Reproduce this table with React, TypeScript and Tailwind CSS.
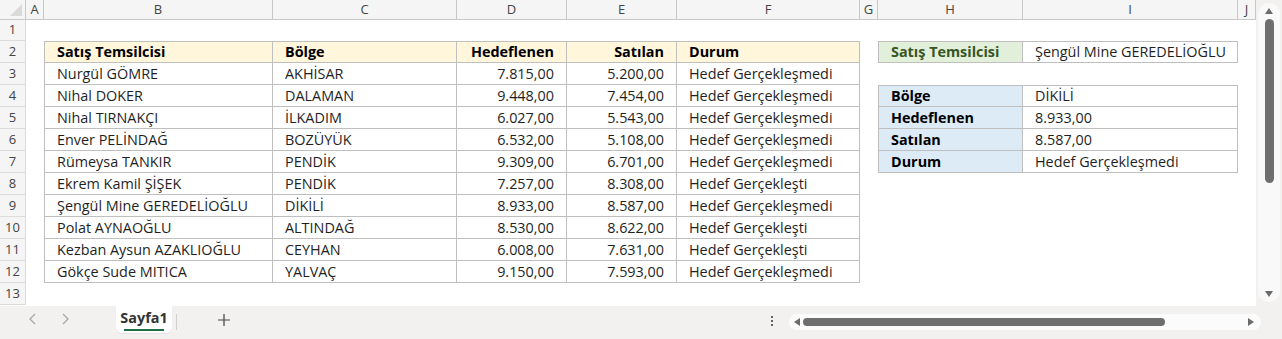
import React from "react";

const COLS = ["", "A", "B", "C", "D", "E", "F", "G", "H", "I", "J"];

const DATA: [string, string, string, string, string][] = [
  ["Nurgül GÖMRE", "AKHİSAR", "7.815,00", "5.200,00", "Hedef Gerçekleşmedi"],
  ["Nihal DOKER", "DALAMAN", "9.448,00", "7.454,00", "Hedef Gerçekleşmedi"],
  ["Nihal TIRNAKÇI", "İLKADIM", "6.027,00", "5.543,00", "Hedef Gerçekleşmedi"],
  ["Enver PELİNDAĞ", "BOZÜYÜK", "6.532,00", "5.108,00", "Hedef Gerçekleşmedi"],
  ["Rümeysa TANKIR", "PENDİK", "9.309,00", "6.701,00", "Hedef Gerçekleşmedi"],
  ["Ekrem Kamil ŞİŞEK", "PENDİK", "7.257,00", "8.308,00", "Hedef Gerçekleşti"],
  ["Şengül Mine GEREDELİOĞLU", "DİKİLİ", "8.933,00", "8.587,00", "Hedef Gerçekleşmedi"],
  ["Polat AYNAOĞLU", "ALTINDAĞ", "8.530,00", "8.622,00", "Hedef Gerçekleşti"],
  ["Kezban Aysun AZAKLIOĞLU", "CEYHAN", "6.008,00", "7.631,00", "Hedef Gerçekleşti"],
  ["Gökçe Sude MITICA", "YALVAÇ", "9.150,00", "7.593,00", "Hedef Gerçekleşmedi"],
];

const SIDE: Record<number, [string, string]> = {
  4: ["Bölge", "DİKİLİ"],
  5: ["Hedeflenen", "8.933,00"],
  6: ["Satılan", "8.587,00"],
  7: ["Durum", "Hedef Gerçekleşmedi"],
};

function renderCell(r: number, c: number) {
  const key = `${r}-${c}`;
  // main table B2:F12
  if (r >= 2 && r <= 12 && c >= 2 && c <= 6) {
    const right = c === 4 || c === 5;
    const top = r === 2 ? " border-t" : "";
    const left = c === 2 ? " border-l" : "";
    if (r === 2) {
      const label = ["Satış Temsilcisi", "Bölge", "Hedeflenen", "Satılan", "Durum"][c - 2];
      return (
        <div
          key={key}
          className={`flex items-center border-r border-b border-[#bfbfbf] bg-[#fff6dc] px-3 font-bold text-[#5a4a1e]${top}${left}${right ? " justify-end" : ""}`}
        >
          {label}
        </div>
      );
    }
    return (
      <div
        key={key}
        className={`flex items-center border-r border-b border-[#bfbfbf] px-3 text-[#1f1f1f]${top}${left}${right ? " justify-end" : ""}`}
      >
        {DATA[r - 3][c - 2]}
      </div>
    );
  }
  // lookup H2:I2
  if (r === 2 && (c === 8 || c === 9)) {
    return c === 8 ? (
      <div key={key} className="flex items-center border border-[#bfbfbf] bg-[#e2efda] px-3 font-bold text-[#375623]">
        Satış Temsilcisi
      </div>
    ) : (
      <div key={key} className="flex items-center whitespace-nowrap border-y border-r border-[#bfbfbf] px-3 text-[#1f1f1f]">
        Şengül Mine GEREDELİOĞLU
      </div>
    );
  }
  // result H4:I7
  if (r >= 4 && r <= 7 && (c === 8 || c === 9)) {
    const top = r === 4 ? " border-t" : "";
    return c === 8 ? (
      <div key={key} className={`flex items-center border-x border-b border-[#bfbfbf] bg-[#ddebf7] px-3 font-bold text-[#1f4e78]${top}`}>
        {SIDE[r][0]}
      </div>
    ) : (
      <div key={key} className={`flex items-center border-r border-b border-[#bfbfbf] px-3 text-[#1f1f1f]${top}`}>
        {SIDE[r][1]}
      </div>
    );
  }
  return <div key={key} />;
}

export default function App() {
  const rows = Array.from({ length: 13 }, (_, i) => i + 1);
  return (
    <div className="flex h-[339px] w-[1282px] flex-col overflow-hidden bg-[#f3f0f0] font-['Segoe_UI','Open_Sans',sans-serif] text-[14.4px]">
      <div className="flex h-[306px]">
        <div className="grid w-[1256px] grid-cols-[26px_18px_229px_184px_110px_110px_183px_18px_145px_215px_18px] grid-rows-[20px_21px_repeat(12,22px)] bg-white">
          {/* column headers */}
          {COLS.map((l, i) =>
            i === 0 ? (
              <div key="corner" className="relative border-r border-b border-[#c8c8c8] bg-[#f5f5f5]">
                <svg width="12" height="12" className="absolute right-[3px] bottom-[3px]">
                  <polygon points="12,0 12,12 0,12" fill="#dadada" />
                </svg>
              </div>
            ) : (
              <div
                key={l}
                className="flex items-center justify-center border-r border-b border-[#c8c8c8] bg-[#f5f5f5] text-[13px] text-[#444]"
              >
                {l}
              </div>
            )
          )}
          {rows.map((r) => (
            <React.Fragment key={r}>
              <div className="flex items-center justify-center border-r border-b border-[#dcdcdc] bg-[#f5f5f5] text-[13px] text-[#444]">
                {r}
              </div>
              {Array.from({ length: 10 }, (_, j) => renderCell(r, j + 1))}
            </React.Fragment>
          ))}
        </div>
        {/* vertical scrollbar */}
        <div className="flex w-[26px] flex-col items-center bg-[#f3f0f0] pb-1 pt-[3px]">
          <div className="flex w-[22px] flex-1 flex-col items-center rounded-full bg-[#f9f9f9]">
            <svg width="10" height="8" viewBox="0 0 10 8" className="mt-[4px]">
              <polygon points="5,1 9,7 1,7" fill="#6b6b6b" />
            </svg>
            <div className="mt-[4px] h-[164px] w-[9px] rounded-full bg-[#6e6e6e]" />
            <div className="flex-1" />
            <svg width="10" height="8" viewBox="0 0 10 8" className="mb-[4px]">
              <polygon points="1,1 9,1 5,7" fill="#6b6b6b" />
            </svg>
          </div>
        </div>
      </div>
      {/* sheet tabs bar */}
      <div className="flex h-[33px] items-start">
        <div className="flex w-[116px] items-center pt-[6px]">
          <svg width="10" height="14" viewBox="0 0 10 14" className="ml-[28px]">
            <polyline points="7,2 2,7 7,12" fill="none" stroke="#a8a8a8" strokeWidth="1.3" />
          </svg>
          <svg width="10" height="14" viewBox="0 0 10 14" className="ml-[22px]">
            <polyline points="3,2 8,7 3,12" fill="none" stroke="#a8a8a8" strokeWidth="1.3" />
          </svg>
        </div>
        <div className="flex h-[27px] w-[56px] flex-col items-center rounded-b-md bg-white pt-[3px] shadow-[0_1px_1px_rgba(0,0,0,0.06)]">
          <span className="text-[14.4px] font-bold leading-[18px] text-[#333]">Sayfa1</span>
          <div className="mt-[2px] h-[2px] w-[40px] bg-[#1e7145]" />
        </div>
        <div className="ml-[4px] mt-[8px] h-[16px] w-px bg-[#d0d0d0]" />
        <div className="ml-[40px] flex h-[27px] items-center">
          <svg width="14" height="14" viewBox="0 0 14 14">
            <path d="M7 1v12M1 7h12" stroke="#444" strokeWidth="1.2" />
          </svg>
        </div>
        <div className="ml-[540px] flex h-[29px] flex-col items-center justify-center gap-[2px]">
          <div className="h-[2px] w-[2px] rounded-full bg-[#333]" />
          <div className="h-[2px] w-[2px] rounded-full bg-[#333]" />
          <div className="h-[2px] w-[2px] rounded-full bg-[#333]" />
        </div>
        <div className="ml-[16px] mt-[8px] flex h-[16px] w-[472px] items-center rounded-full bg-[#fbfbfb] px-[4px]">
          <svg width="8" height="10" viewBox="0 0 8 10">
            <polygon points="7,1 7,9 1,5" fill="#6b6b6b" />
          </svg>
          <div className="ml-[2px] h-[8px] w-[362px] rounded-full bg-[#6e6e6e]" />
          <div className="flex-1" />
          <svg width="8" height="10" viewBox="0 0 8 10" className="mr-[2px]">
            <polygon points="1,1 1,9 7,5" fill="#6b6b6b" />
          </svg>
        </div>
      </div>
    </div>
  );
}
